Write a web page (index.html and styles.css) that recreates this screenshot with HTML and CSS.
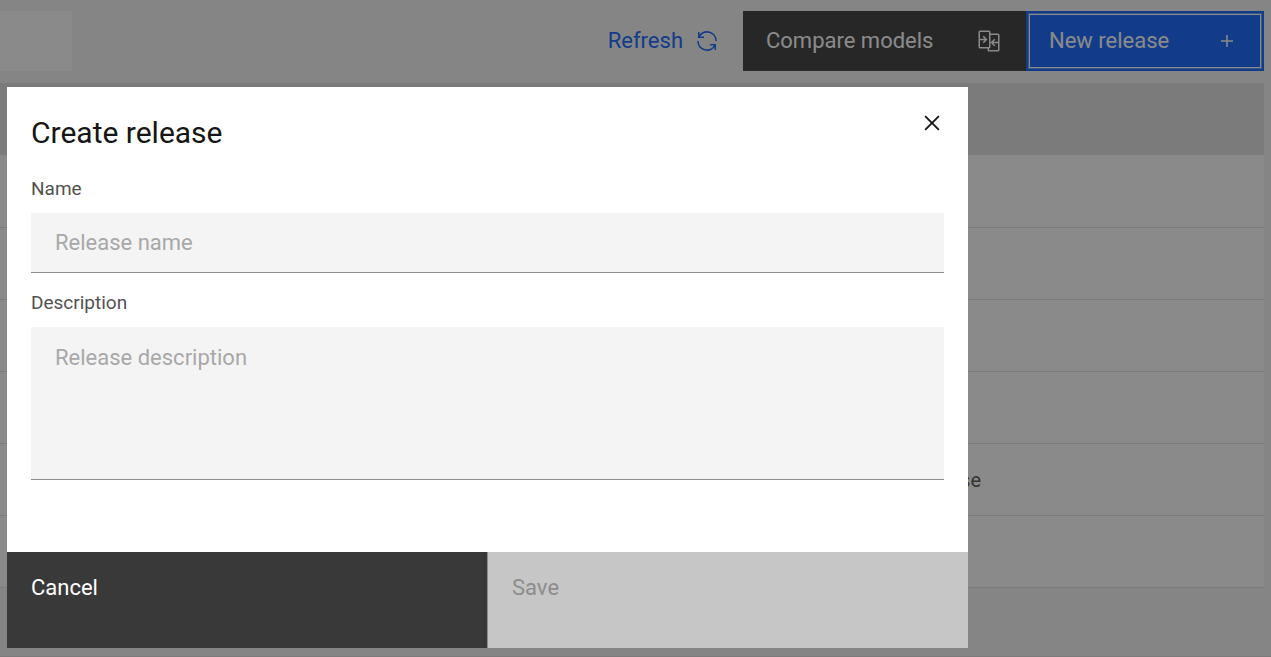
FILE: index.html
```html
<!DOCTYPE html>
<html lang="en">
<head>
    <meta charset="utf-8">
    <title>Create release</title>
    <link rel="stylesheet" href="styles.css">
</head>
<body>
    <div class="page">
        <div class="toolbar">
            <input class="search" type="search" aria-label="Search">
            <div class="actions">
                <button class="btn btn-ghost">
                    <span>Refresh</span>
                    <svg width="24" height="24" viewBox="0 0 32 32" fill="currentColor">
                        <path d="M12 10H6.78A11 11 0 0 1 27 16h2A13 13 0 0 0 6 7.68V4H4v8h8zM20 22h5.22A11 11 0 0 1 5 16H3a13 13 0 0 0 23 8.32V28h2v-8h-8z"/>
                    </svg>
                </button>
                <button class="btn btn-secondary">
                    <span>Compare models</span>
                    <svg width="24" height="24" viewBox="0 0 32 32" fill="currentColor">
                        <path d="M28 6H18V4a2 2 0 0 0-2-2H4a2 2 0 0 0-2 2v20a2 2 0 0 0 2 2h10v2a2 2 0 0 0 2 2h12a2 2 0 0 0 2-2V8a2 2 0 0 0-2-2zM4 15h6.17l-2.58 2.59L9 19l5-5-5-5-1.41 1.41L10.17 13H4V4h12v20H4zm12 13v-2a2 2 0 0 0 2-2V8h10v9h-6.17l2.58-2.59L23 13l-5 5 5 5 1.41-1.41L21.83 19H28v9z"/>
                    </svg>
                </button>
                <button class="btn btn-primary">
                    <span>New release</span>
                    <svg width="24" height="24" viewBox="0 0 32 32" fill="currentColor">
                        <path d="M17 15V8h-2v7H8v2h7v7h2v-7h7v-2z"/>
                    </svg>
                </button>
            </div>
        </div>

        <table class="releases">
            <thead>
                <tr><th></th><th class="col-end"></th></tr>
            </thead>
            <tbody>
                <tr><td></td><td></td></tr>
                <tr><td></td><td></td></tr>
                <tr><td></td><td></td></tr>
                <tr><td></td><td></td></tr>
                <tr><td>se</td><td></td></tr>
                <tr><td></td><td></td></tr>
            </tbody>
        </table>
    </div>

    <div class="overlay">
        <form class="modal" role="dialog" aria-labelledby="modal-title">
            <div class="modal-header">
                <h2 id="modal-title">Create release</h2>
                <button class="close" type="button" aria-label="Close">
                    <svg width="30" height="30" viewBox="0 0 32 32" fill="currentColor">
                        <path d="M24 9.4L22.6 8 16 14.6 9.4 8 8 9.4l6.6 6.6L8 22.6 9.4 24l6.6-6.6 6.6 6.6 1.4-1.4-6.6-6.6z"/>
                    </svg>
                </button>
            </div>
            <div class="modal-body">
                <div class="field">
                    <label for="name">Name</label>
                    <input id="name" type="text" placeholder="Release name">
                </div>
                <div class="field">
                    <label for="description">Description</label>
                    <textarea id="description" placeholder="Release description"></textarea>
                </div>
            </div>
            <div class="modal-footer">
                <button class="cancel" type="button">Cancel</button>
                <button class="save" type="submit" disabled>Save</button>
            </div>
        </form>
    </div>
</body>
</html>
```
FILE: styles.css
```css
* {
    box-sizing: border-box;
}

body {
    margin: 0;
    font-family: Roboto, "Liberation Sans", sans-serif;
    font-size: 22px;
    line-height: 28px;
    color: #161616;
}

button,
input,
textarea {
    font: inherit;
    border: none;
    border-radius: 0;
    outline: none;
}

.page {
    min-height: 100vh;
    padding: 11px 7px 0 0;
    background: #f4f4f4;
    border-bottom: 1px solid #e0e0e0;
}

/* toolbar */
.toolbar {
    display: flex;
    justify-content: space-between;
    margin-bottom: 12px;
}

.search {
    width: 72px;
    height: 60px;
    background: #fff;
}

.actions {
    display: flex;
}

.btn {
    display: flex;
    align-items: center;
    justify-content: space-between;
    height: 60px;
    padding: 0 25px 0 23px;
    color: #fff;
}

.btn-ghost {
    gap: 12px;
    padding: 0 24px;
    background: none;
    color: #0f62fe;
}

.btn-secondary {
    width: 283px;
    background: #393939;
}

.btn-primary {
    width: 238px;
    background: #0f62fe;
    box-shadow: inset 0 0 0 2px #0f62fe, inset 0 0 0 3px #6098fe, inset 0 0 0 4px #fff;
}

/* table */
.releases {
    width: 100%;
    table-layout: fixed;
    border-spacing: 0;
}

.releases th {
    height: 73px;
    background: #e0e0e0;
    border-bottom: 1px solid #fff;
}

.releases td {
    height: 72px;
    padding: 0;
    background: #fff;
    border-bottom: 1px solid #e0e0e0;
    font-size: 20px;
    text-align: right;
    color: #525252;
}

.releases .col-end {
    width: 283px;
}

/* modal */
.overlay {
    position: fixed;
    inset: 0;
    padding: 87px 7px 0;
    background: rgba(22, 22, 22, 0.5);
}

.modal {
    max-width: 961px;
    background: #fff;
}

.modal-header {
    display: flex;
    justify-content: space-between;
    padding: 21px 21px 0 24px;
}

.modal-header h2 {
    margin: 6px 0 0;
    font-size: 30px;
    font-weight: 400;
    line-height: 38px;
}

.close {
    display: flex;
    height: 30px;
    padding: 0;
    background: none;
    color: #161616;
}

.modal-body {
    padding: 25px 24px 72px;
}

.field + .field {
    margin-top: 18px;
}

.field label {
    display: block;
    margin-bottom: 12px;
    font-size: 19px;
    line-height: 24px;
    color: #525252;
}

.field input,
.field textarea {
    display: block;
    width: 100%;
    padding: 0 24px;
    background: #f4f4f4;
    border-bottom: 1px solid #8d8d8d;
}

.field input {
    height: 60px;
}

.field textarea {
    height: 153px;
    padding-top: 17px;
    resize: none;
}

.field ::placeholder {
    color: #a8a8a8;
    opacity: 1;
}

.modal-footer {
    display: flex;
}

.modal-footer button {
    flex: 1;
    height: 96px;
    padding: 22px 24px 46px;
    text-align: left;
}

.modal-footer .cancel {
    background: #393939;
    color: #fff;
    border-right: 1px solid #8d8d8d;
}

.modal-footer .save {
    background: #c6c6c6;
    color: #8d8d8d;
}
```
